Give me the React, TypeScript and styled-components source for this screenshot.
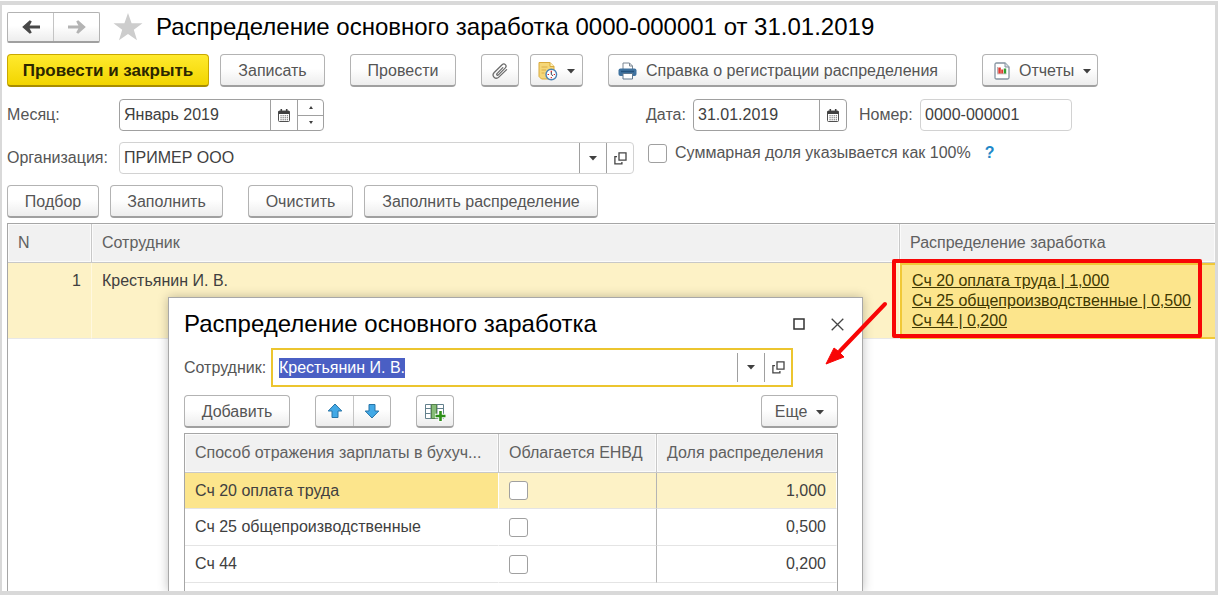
import React, { useEffect, useRef } from "react";
import styled, { createGlobalStyle, css } from "styled-components";

const GlobalStyle = createGlobalStyle`
  * { box-sizing: border-box; }
  body {
    margin: 0;
    background: #fff;
    color: #404040;
    font: 16px/20px "Liberation Sans", Arial, sans-serif;
  }
  button, input { font: inherit; color: inherit; }
`;

const Frame = styled.main`
  position: relative;
  display: flex;
  flex-direction: column;
  height: calc(100vh - 5px);
  margin: 1px 0 4px;
  padding: 7px 0 0 5px;
  border: solid #d9d9d9;
  border-width: 4px 3px 4px 2px;
  overflow: hidden;
`;

const TitleBar = styled.header`
  display: flex;
  align-items: center;
  height: 30px;
`;

const Title = styled.h1`
  margin: 0;
  font-size: 24px;
  line-height: 28px;
  font-weight: 400;
  color: #000;
  white-space: nowrap;
`;

const raised = css`
  border: 1px solid #b3b3b3;
  border-bottom: 2px solid #a0a0a0;
  border-radius: 4px;
  background: linear-gradient(#fff 45%, #ededed);
`;

const Group = styled.div`
  display: flex;
  height: 33px;
  ${raised}
`;

const NavGroup = styled(Group)`
  height: 31px;
  width: 93px;
  border-radius: 2px;
`;

const GroupButton = styled.button`
  flex: 1;
  min-width: 37px;
  display: flex;
  align-items: center;
  justify-content: center;
  padding: 0;
  border: 0;
  background: none;
  & + & { border-left: 1px solid #c4c4c4; }
`;

const StarButton = styled.button`
  display: flex;
  margin: 0 13px;
  padding: 0;
  border: 0;
  background: none;
`;

const Toolbar = styled.div<{ $top: number }>`
  display: flex;
  gap: 25px;
  margin-top: ${(p) => p.$top}px;
`;

const Cluster = styled.div`
  display: flex;
  gap: 11px;
`;

const Button = styled.button<{ $width: number; $primary?: boolean }>`
  display: flex;
  align-items: center;
  justify-content: center;
  gap: 9px;
  min-width: ${(p) => p.$width}px;
  height: 33px;
  padding: 2px 0 0;
  white-space: nowrap;
  color: #555;
  ${raised}
  ${(p) =>
    p.$primary &&
    css`
      font-size: 17px;
      font-weight: 700;
      color: #2b2600;
      border-color: #c9a800 #c9a800 #a88d00;
      background: linear-gradient(#ffea2e, #f2d500);
    `}
`;

const IconButton = styled(Button)`
  justify-content: flex-start;
  padding-left: 9px;
`;

const Form = styled.div`
  display: grid;
  grid-template-columns: minmax(0, 627px) 1fr;
  column-gap: 12px;
  margin-top: 12px;
`;

const FormColumn = styled.div<{ $gap: number }>`
  display: flex;
  flex-direction: column;
  gap: ${(p) => p.$gap}px;
`;

const FormRow = styled.div`
  display: flex;
  align-items: center;
`;

const Label = styled.label<{ $width: number; $indent?: boolean }>`
  flex: 0 0 ${(p) => p.$width}px;
  padding-left: ${(p) => (p.$indent ? 12 : 0)}px;
  color: #555;
  white-space: nowrap;
`;

const Field = styled.div<{ $width?: number; $soft?: boolean }>`
  display: flex;
  ${(p) => (p.$width ? `width: ${p.$width}px;` : "flex: 1;")}
  height: 32px;
  border: 1px solid ${(p) => (p.$soft ? "#d2d2d2" : "#a0a0a0")};
  border-radius: 4px;
  background: #fff;
  overflow: hidden;
`;

const Input = styled.input`
  flex: 1;
  min-width: 0;
  padding: 0 4px;
  border: 0;
  outline: 0;
  background: none;
  &::selection { background: #4a5fc4; color: #fff; }
`;

const FieldButton = styled.button`
  flex: 0 0 27px;
  display: flex;
  align-items: center;
  justify-content: center;
  padding: 0;
  border: 0;
  border-left: 1px solid #a0a0a0;
  background: none;
`;

const Spinner = styled.div`
  flex: 0 0 26px;
  display: flex;
  flex-direction: column;
  border-left: 1px solid #a0a0a0;
`;

const SpinButton = styled.button`
  flex: 1;
  display: flex;
  align-items: center;
  justify-content: center;
  padding: 0;
  border: 0;
  background: none;
  & + & { border-top: 1px solid #a0a0a0; }
`;

const CheckLabel = styled.label`
  display: flex;
  align-items: center;
  gap: 8px;
  padding-left: 2px;
  color: #555;
  white-space: nowrap;
`;

const Check = styled.input.attrs({ type: "checkbox" })`
  appearance: none;
  display: block;
  width: 19px;
  height: 19px;
  margin: 0;
  border: 1px solid #a0a0a0;
  border-radius: 3px;
  background: #fff;
`;

const Help = styled.a`
  margin-left: 14px;
  font-weight: 700;
  color: #1e88c8;
  text-decoration: none;
`;

const TableBox = styled.div<{ $closed?: boolean }>`
  flex: 1;
  border: solid #a6a6a6;
  border-width: 1px ${(p) => (p.$closed ? 1 : 0)}px 0 1px;
`;

const MainTable = styled(TableBox)`
  margin-top: 5px;
`;

const Table = styled.table`
  width: 100%;
  table-layout: fixed;
  border-collapse: separate;
  border-spacing: 0;
`;

const HeadCell = styled.th<{ $width?: number }>`
  width: ${(p) => (p.$width ? p.$width + "px" : "auto")};
  height: 39px;
  padding: 0 10px;
  border: solid #c8c8c8;
  border-width: 0 1px 1px 0;
  background: #f1f1f1;
  box-shadow: inset 0 0 0 1px #fbfbfb;
  font-weight: 400;
  text-align: left;
  color: #606060;
  white-space: nowrap;
  &:last-child { border-right: 0; }
`;

const EmployeeCell = styled.td<{ $right?: boolean }>`
  height: 76px;
  padding: 8px 10px 0;
  vertical-align: top;
  text-align: ${(p) => (p.$right ? "right" : "left")};
  background: #fdf2c6;
  border-right: 1px solid #fff8e0;
  border-bottom: 1px solid #e8e8e8;
`;

const ActiveCell = styled(EmployeeCell)`
  position: relative;
  background: #fce58c;
  padding-top: 6px;
  border: solid #f0c838;
  border-width: 2px 0 2px 2px;
`;

const AccountLink = styled.a`
  display: block;
  width: max-content;
  color: #403800;
`;

const RedBox = styled.div`
  position: absolute;
  inset: -6px 13px -1px -10px;
  border: 4px solid #f80606;
  border-radius: 2px;
  pointer-events: none;
`;

const RedArrow = styled.svg`
  position: absolute;
  z-index: 3;
  left: -80px;
  top: 32px;
  pointer-events: none;
`;

const Dialog = styled.section`
  position: absolute;
  z-index: 2;
  left: 166px;
  top: 292px;
  bottom: 0;
  width: 695px;
  display: flex;
  flex-direction: column;
  padding: 12px 24px 0 15px;
  border: solid #a8a8a8;
  border-width: 1px 1px 0;
  background: #fff;
  box-shadow: 0 0 10px rgba(0, 0, 0, 0.25);
`;

const DialogHeader = styled.div`
  display: flex;
  align-items: center;
  height: 28px;
`;

const DialogTitle = styled(Title).attrs({ as: "h2" })`
  flex: 1;
`;

const WindowButton = styled.button`
  display: flex;
  align-items: center;
  justify-content: center;
  width: 39px;
  height: 28px;
  padding: 0;
  border: 0;
  background: none;
  &:last-child { width: 14px; margin-left: 12px; margin-right: -6px; }
`;

const DialogRow = styled(FormRow)`
  margin: 10px 45px 0 0;
`;

const FocusField = styled(Field)`
  height: 39px;
  padding: 3px 0 3px 2px;
  border: 2px solid #ecc52f;
  border-radius: 0;
`;

const DialogTools = styled(Toolbar)`
  margin-bottom: 5px;
`;

const Push = styled.div`
  margin-left: auto;
`;

const Cell = styled.td<{ $tone?: "row" | "active"; $right?: boolean; $line?: boolean }>`
  height: ${(p) => (p.$tone ? 36 : 37)}px;
  padding: 0 10px;
  text-align: ${(p) => (p.$right ? "right" : "left")};
  background: ${(p) => (p.$tone === "active" ? "#fce58c" : p.$tone === "row" ? "#fdf2c6" : "#fff")};
  border-bottom: 1px solid #e4e4e4;
  border-right: ${(p) => (p.$line ? "1px solid #b4b4b4" : "1px solid #fff")};
`;

const Caret = () => (
  <svg width="8" height="5" viewBox="0 0 8 5"><path d="M0 0h8L4 4.6z" fill="#404040" /></svg>
);

const SpinMark = ({ down }: { down?: boolean }) => (
  <svg width="4" height="3" viewBox="0 0 4 3"><path d={down ? "M0 0h4L2 3z" : "M0 3h4L2 0z"} fill="#404040" /></svg>
);

const NavArrow = ({ color, flip }: { color: string; flip?: boolean }) => (
  <svg width="18" height="14" viewBox="0 0 18 14">
    <path
      d="M18 5.400H7.600L9.800 1.400 7.800 .3 .2 7l7.600 6.700 2-1.100-2.200-4H18z"
      fill={color}
      transform={flip ? "matrix(-1 0 0 1 18 0)" : undefined}
    />
  </svg>
);

const Star = () => (
  <svg width="30" height="28" viewBox="0 0 30 28">
    <path d="M15 0l3.600 10.200 10.900.1-8.700 6.500 3.200 10.500L15 21l-9 6.300 3.200-10.500L.5 10.300l10.900-.1z" fill="#cdcdcd" />
  </svg>
);

const Calendar = () => (
  <svg width="12" height="13" viewBox="0 0 12 13">
    <rect x=".5" y="2" width="11" height="10.500" rx="1" fill="#fff" stroke="#505050" />
    <path d="M.5 2h11v3H.5zM2.500 0h1.600v2H2.500zM7.900 0h1.600v2H7.900z" fill="#404040" />
    <path d="M2.500 6.700h7.400M2.500 8.700h7.400M2.500 10.700h7.400" stroke="#505050" strokeWidth="1.100" strokeDasharray="1.100 1" />
  </svg>
);

const OpenIcon = () => (
  <svg width="13" height="13" viewBox="0 0 13 13" fill="none" stroke="#444" strokeWidth="1.300">
    <path d="M5 .9h7v7.200H5zM3 4.600H.9v7.200h7V9.900" />
  </svg>
);

const Clip = () => (
  <svg width="18" height="18" viewBox="0 0 18 18" fill="none" stroke="#6c6c6c" strokeWidth="1.300" strokeLinecap="round" strokeLinejoin="round">
    <path d="M11.800 5.600L6 11.600c-.9 1 .4 2.300 1.400 1.300l6.900-7c2.100-2.300-.9-5.300-3.200-3.200L3.200 10.500c-3.100 3.300 1.300 7.700 4.600 4.600L15.600 7.600" />
  </svg>
);

const NoteClock = () => (
  <svg width="20" height="20" viewBox="0 0 20 20">
    <path d="M1 1.500h11l4 4V18H3.500L1 15.500z" fill="#f5d778" stroke="#d9a93c" />
    <path d="M12 1.500v4h4" fill="#fff2bd" stroke="#d9a93c" />
    <path d="M3.500 6h6M3.500 9h4.500M3.500 12h3" stroke="#dcae48" />
    <circle cx="13.300" cy="13.500" r="5.300" fill="#fff" stroke="#4b83b5" strokeWidth="1.400" />
    <path d="M13.300 9.800v1.400M13.300 16v1.300M9.600 13.500H11M15.700 13.500H17" stroke="#d22" strokeWidth="1.200" />
    <path d="M13.300 11v2.500l1.800 1.300" fill="none" stroke="#345" />
  </svg>
);

const Printer = () => (
  <svg width="19" height="18" viewBox="0 0 19 18">
    <path d="M5 7V1h6.500L14.500 4v3" fill="#fff" stroke="#7c8894" />
    <path d="M11.500 1v3h3" fill="none" stroke="#7c8894" />
    <rect x=".5" y="6.500" width="18" height="7.500" rx="2" fill="#3f729f" />
    <path d="M3 9.500h13" stroke="#24527c" strokeWidth="1.400" />
    <path d="M5 11.500h9.500v5.500H5z" fill="#fff" stroke="#60788f" />
  </svg>
);

const Report = () => (
  <svg width="18" height="18" viewBox="-2 0 18 18">
    <path d="M1 2.500Q1 1 2.500 1H11l4 4v10.500q0 1.500-1.500 1.500h-11Q1 17 1 15.500z" fill="#fff" stroke="#8593a0" strokeWidth="1.300" />
    <path d="M11 1v4h4" fill="#dbe1e6" stroke="#8593a0" />
    <path d="M3.500 5v6.500M3 11.800h9.500" stroke="#b5b5b5" />
    <path d="M4.300 5.500h2.500v6H4.300z" fill="#e03a32" />
    <path d="M7.200 7.500h2v4h-2z" fill="#e03a32" />
    <path d="M9.800 6.500h2.400v5H9.800z" fill="#30a030" />
  </svg>
);

const MoveArrow = ({ down }: { down?: boolean }) => (
  <svg width="16" height="16" viewBox="0 0 16 16">
    <path
      d="M8 1L14.800 8H11v6.500H5V8H1.200z"
      fill="#42a9e6"
      stroke="#2775a8"
      strokeLinejoin="round"
      transform={down ? "matrix(1 0 0 -1 0 16)" : undefined}
    />
  </svg>
);

const AddColumn = () => (
  <svg width="22" height="20" viewBox="0 0 22 20">
    <path d="M1.500 2.500h18v14h-18z" fill="#fff" stroke="#62808c" />
    <path d="M1.500 6.500h18M1.500 11.500h5M7 2.500v14M13 2.500v14" fill="none" stroke="#62808c" />
    <path d="M7.500 2.500h5v14h-5z" fill="#86bc78" stroke="#55824c" />
    <path d="M16.500 8.500v11M11 14h10.500" stroke="#fff" strokeWidth="4.500" />
    <path d="M16.500 9v10M11.500 14h10" stroke="#2d8f18" strokeWidth="2.600" />
  </svg>
);

const entries = [
  { name: "Сч 20 оплата труда", share: "1,000" },
  { name: "Сч 25 общепроизводственные", share: "0,500" },
  { name: "Сч 44", share: "0,200" },
];

export default function App() {
  const employee = useRef<HTMLInputElement>(null);
  useEffect(() => {
    employee.current?.focus();
    employee.current?.select();
  }, []);

  return (
    <>
      <GlobalStyle />
      <Frame>
        <TitleBar>
          <NavGroup>
            <GroupButton aria-label="Назад"><NavArrow color="#484848" /></GroupButton>
            <GroupButton aria-label="Вперед"><NavArrow color="#b4b4b4" flip /></GroupButton>
          </NavGroup>
          <StarButton aria-label="В избранное"><Star /></StarButton>
          <Title>Распределение основного заработка 0000-000001 от 31.01.2019</Title>
        </TitleBar>

        <Toolbar $top={12}>
          <Cluster>
            <Button $width={202} $primary>Провести и закрыть</Button>
            <Button $width={105}>Записать</Button>
          </Cluster>
          <Button $width={106}>Провести</Button>
          <Cluster>
            <Button $width={38} aria-label="Файлы"><Clip /></Button>
            <Button $width={53} aria-label="Напоминания"><NoteClock /><Caret /></Button>
          </Cluster>
          <IconButton $width={349}><Printer />Справка о регистрации распределения</IconButton>
          <IconButton $width={116}><Report />Отчеты<Caret /></IconButton>
        </Toolbar>

        <Form>
          <FormColumn $gap={11}>
            <FormRow>
              <Label $width={112} htmlFor="month">Месяц:</Label>
              <Field $width={205}>
                <Input id="month" defaultValue="Январь 2019" />
                <FieldButton aria-label="Выбрать месяц"><Calendar /></FieldButton>
                <Spinner>
                  <SpinButton aria-label="Следующий месяц"><SpinMark /></SpinButton>
                  <SpinButton aria-label="Предыдущий месяц"><SpinMark down /></SpinButton>
                </Spinner>
              </Field>
            </FormRow>
            <FormRow>
              <Label $width={112} htmlFor="org">Организация:</Label>
              <Field $soft>
                <Input id="org" defaultValue="ПРИМЕР ООО" />
                <FieldButton aria-label="Список организаций"><Caret /></FieldButton>
                <FieldButton aria-label="Открыть организацию"><OpenIcon /></FieldButton>
              </Field>
            </FormRow>
          </FormColumn>
          <FormColumn $gap={12}>
            <FormRow>
              <Label $width={47} htmlFor="date">Дата:</Label>
              <Field $width={154}>
                <Input id="date" defaultValue="31.01.2019" />
                <FieldButton aria-label="Выбрать дату"><Calendar /></FieldButton>
              </Field>
              <Label $width={73} $indent htmlFor="number">Номер:</Label>
              <Field $width={152} $soft>
                <Input id="number" defaultValue="0000-000001" />
              </Field>
            </FormRow>
            <FormRow>
              <CheckLabel><Check />Суммарная доля указывается как 100%</CheckLabel>
              <Help href="#help">?</Help>
            </FormRow>
          </FormColumn>
        </Form>

        <Toolbar $top={11}>
          <Cluster>
            <Button $width={92}>Подбор</Button>
            <Button $width={113}>Заполнить</Button>
          </Cluster>
          <Cluster>
            <Button $width={105}>Очистить</Button>
            <Button $width={234}>Заполнить распределение</Button>
          </Cluster>
        </Toolbar>

        <MainTable>
          <Table>
            <thead>
              <tr>
                <HeadCell $width={84}>N</HeadCell>
                <HeadCell>Сотрудник</HeadCell>
                <HeadCell $width={315}>Распределение заработка</HeadCell>
              </tr>
            </thead>
            <tbody>
              <tr>
                <EmployeeCell $right>1</EmployeeCell>
                <EmployeeCell>Крестьянин И. В.</EmployeeCell>
                <ActiveCell>
                  {entries.map((e) => (
                    <AccountLink key={e.name} href="#account">{e.name} | {e.share}</AccountLink>
                  ))}
                  <RedBox />
                  <RedArrow width="76" height="76" viewBox="0 0 76 76">
                    <path d="M63 7L18 54" stroke="#f80606" strokeWidth="4" strokeLinecap="round" />
                    <path d="M4 67L12 51l4 3 6 6z" fill="#f80606" stroke="#f80606" strokeLinejoin="round" />
                  </RedArrow>
                </ActiveCell>
              </tr>
            </tbody>
          </Table>
        </MainTable>

        <Dialog role="dialog" aria-labelledby="dialog-title">
          <DialogHeader>
            <DialogTitle id="dialog-title">Распределение основного заработка</DialogTitle>
            <WindowButton aria-label="Развернуть">
              <svg width="12" height="12" viewBox="0 0 12 12"><path d="M1 1h10v10H1z" fill="none" stroke="#333" strokeWidth="1.500" /></svg>
            </WindowButton>
            <WindowButton aria-label="Закрыть">
              <svg width="13" height="13" viewBox="0 0 13 13"><path d="M.7.7l11.600 11.600M12.300.7L.7 12.300" stroke="#444" strokeWidth="1.300" /></svg>
            </WindowButton>
          </DialogHeader>
          <DialogRow>
            <Label $width={87} htmlFor="employee">Сотрудник:</Label>
            <FocusField>
              <Input id="employee" ref={employee} defaultValue="Крестьянин И. В." />
              <FieldButton aria-label="Список сотрудников"><Caret /></FieldButton>
              <FieldButton aria-label="Открыть сотрудника"><OpenIcon /></FieldButton>
            </FocusField>
          </DialogRow>
          <DialogTools $top={8}>
            <Button $width={106}>Добавить</Button>
            <Group>
              <GroupButton aria-label="Вверх"><MoveArrow /></GroupButton>
              <GroupButton aria-label="Вниз"><MoveArrow down /></GroupButton>
            </Group>
            <Button $width={38} aria-label="Добавить колонку"><AddColumn /></Button>
            <Push><Button $width={77}>Еще<Caret /></Button></Push>
          </DialogTools>
          <TableBox $closed>
            <Table>
              <thead>
                <tr>
                  <HeadCell>Способ отражения зарплаты в бухуч...</HeadCell>
                  <HeadCell $width={158}>Облагается ЕНВД</HeadCell>
                  <HeadCell $width={180}>Доля распределения</HeadCell>
                </tr>
              </thead>
              <tbody>
                {entries.map((e, i) => (
                  <tr key={e.name}>
                    <Cell $tone={i === 0 ? "active" : undefined}>{e.name}</Cell>
                    <Cell $tone={i === 0 ? "row" : undefined} $line><Check aria-label={"Облагается ЕНВД: " + e.name} /></Cell>
                    <Cell $tone={i === 0 ? "row" : undefined} $right>{e.share}</Cell>
                  </tr>
                ))}
              </tbody>
            </Table>
          </TableBox>
        </Dialog>
      </Frame>
    </>
  );
}
